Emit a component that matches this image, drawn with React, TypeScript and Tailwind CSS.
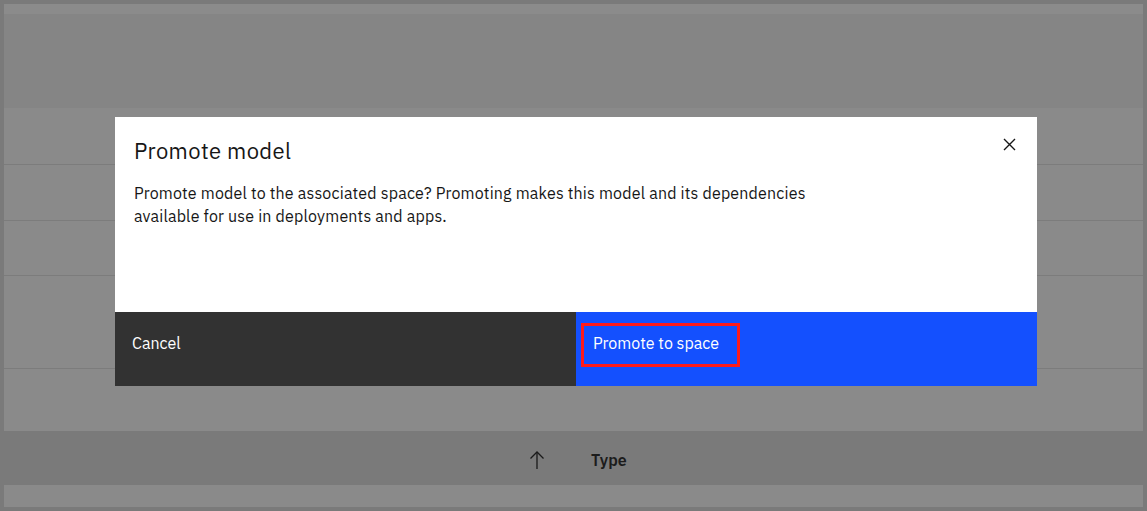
import React from "react";

export default function App() {
  const font = { fontFamily: '"IBM Plex Sans", "Noto Sans", "Open Sans", sans-serif' };
  return (
    <div className="relative w-[1147px] h-[511px] overflow-hidden bg-[#7a7a7a] pt-[4px] pl-[4px] pr-[4px] pb-[4px]" style={font}>
      <div className="flex flex-col h-full bg-[#8a8a8a]">
        <div className="h-[10px] bg-[#8b8b8b]" />
        <div className="h-[94px] bg-[#858585]" />
        <div className="h-[57px] border-b border-[#7c7c7c]" />
        <div className="h-[56px] border-b border-[#7c7c7c]" />
        <div className="h-[55px] border-b border-[#7c7c7c]" />
        <div className="h-[93px] border-b border-[#7c7c7c]" />
        <div className="h-[62px]" />
        <div className="h-[54px] bg-[#7a7a7a] flex items-center pt-[4px]">
          <div className="ml-[525px] flex items-center">
            <svg width="16" height="20" viewBox="0 0 16 20" fill="none" stroke="#1a1a1a" strokeWidth="1.3">
              <path d="M8 19V2" />
              <path d="M1.5 8.5L8 2l6.5 6.5" />
            </svg>
          </div>
          <span className="ml-[46px] text-[16px] font-semibold text-[#1c1c1c]">Type</span>
        </div>
        <div className="flex-1" />
      </div>

      <div className="absolute left-[115px] top-[117px] w-[922px] h-[269px] bg-white flex flex-col">
        <div className="flex-1 relative pl-[19px] pt-[20px]">
          <h2 className="text-[22px] leading-[28px] tracking-[0.4px] text-[#161616] font-normal">Promote model</h2>
          <p className="mt-[17px] text-[16px] leading-[23px] tracking-[0.18px] text-[#161616] w-[720px]">
            Promote model to the associated space? Promoting makes this model and its dependencies available for use in deployments and apps.
          </p>
          <button className="absolute right-[21px] top-[20px] w-[14px] h-[14px] flex items-center justify-center">
            <svg width="13" height="13" viewBox="0 0 13 13" fill="none" stroke="#161616" strokeWidth="1.4">
              <path d="M1 1l11 11M12 1L1 12" />
            </svg>
          </button>
        </div>
        <div className="h-[74px] flex">
          <div className="w-[461px] bg-[#323232] pl-[17px] pt-[20px] leading-[22px] text-white text-[16px]">Cancel</div>
          <div className="flex-1 bg-[#1450fe] relative pl-[17px] pt-[20px] leading-[22px] text-white text-[16px]">
            <span>Promote to space</span>
            <div className="absolute left-[5px] top-[11px] w-[159px] h-[44px] border-[3px] border-[#ff1a1a]" />
          </div>
        </div>
      </div>
    </div>
  );
}
